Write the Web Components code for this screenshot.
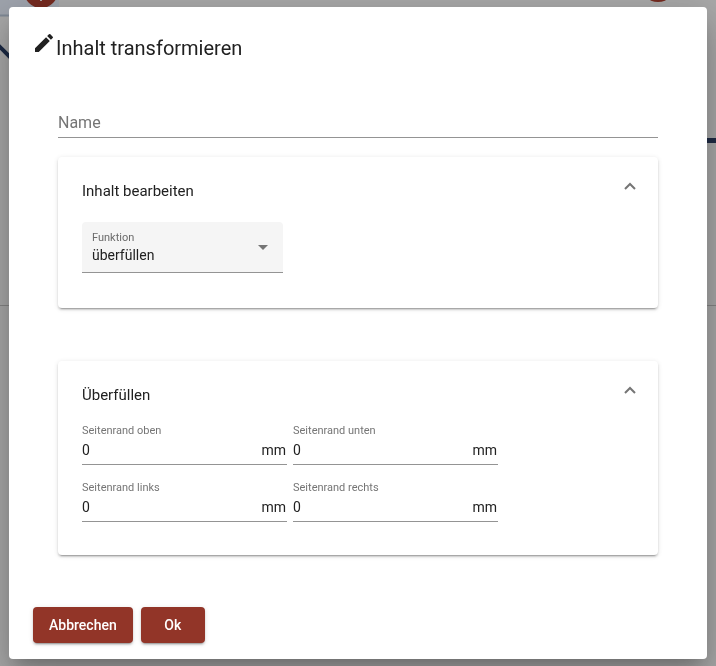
<!DOCTYPE html>
<html lang="de">
<head>
<meta charset="utf-8">
<meta name="viewport" content="width=device-width, initial-scale=1">
<title>Inhalt transformieren</title>
<style>
html, body { margin: 0; height: 100%; }
body { font-family: Roboto, "Liberation Sans", sans-serif; color: #212121; background: #a9a9a9; overflow: hidden; }
</style>
</head>
<body>
<transform-app></transform-app>
<script>
const define = (name, html, setup) => {
  const template = document.createElement('template');
  template.innerHTML = html;
  customElements.define(name, class extends HTMLElement {
    connectedCallback() {
      if (this.shadowRoot) return;
      const root = this.attachShadow({ mode: 'open' });
      root.append(template.content.cloneNode(true));
      if (setup) setup(this, root);
    }
  });
};

define('canvas-backdrop', `
<style>
:host { display: block; position: fixed; inset: 0; overflow: hidden; }
svg { display: block; width: 100%; height: 100%; }
</style>
<svg aria-hidden="true">
  <rect width="59" height="16" fill="#9fa4ad"/>
  <path d="M0 15.5H59" stroke="#808996" stroke-width="2"/>
  <path d="M-4 43L14 61" stroke="#1b2944" stroke-width="4"/>
  <path d="M0 305.5H716" stroke="#858585"/>
  <path d="M690 140.500H1000" stroke="#1f2b45" stroke-width="5"/>
  <circle cx="41" cy="-9" r="17" fill="#762b20"/>
  <path d="M41 -6V1" stroke="#aaa" stroke-width="2"/>
  <circle cx="658" cy="-16" r="18" fill="#762b20"/>
</svg>`);

define('modal-dialog', `
<style>
:host { display: flex; flex-direction: column; position: relative; box-sizing: border-box; margin: 7px 9px; padding-bottom: 16px; background: #fff; border-radius: 4px;
  box-shadow: 0 11px 15px -7px rgba(0,0,0,.2), 0 24px 38px 3px rgba(0,0,0,.14), 0 9px 46px 8px rgba(0,0,0,.12); }
header { display: flex; padding: 24px 23px; }
svg { width: 24px; height: 24px; fill: #212121; }
h1 { margin: 0; padding-top: 1px; font-size: 20px; line-height: 32px; font-weight: 400; }
main { display: flex; flex-direction: column; padding: 18px 49px 52px; }
footer { display: flex; gap: 8px; padding: 0 24px; }
</style>
<header><svg viewBox="0 0 24 24" aria-hidden="true"><path d="M3 17.250V21h3.750L17.810 9.940l-3.750-3.750L3 17.250zM20.710 7.040a1 1 0 0 0 0-1.410l-2.340-2.340a1 1 0 0 0-1.410 0l-1.830 1.830 3.750 3.750 1.830-1.830z"/></svg><h1><slot name="title"></slot></h1></header>
<main><slot></slot></main>
<footer><slot name="actions"></slot></footer>`);

define('name-field', `
<style>
:host { display: block; margin-bottom: 19px; }
input { display: block; box-sizing: border-box; width: 100%; height: 32px; padding: 2px 0 0; border: 0; border-bottom: 1px solid #949494; background: none; font: 400 16px/24px Roboto, "Liberation Sans", sans-serif; color: #212121; outline: 0; border-radius: 0; }
input::placeholder { color: #757575; opacity: 1; }
</style>
<input type="text" aria-label="Name" placeholder="Name">`);

define('expansion-card', `
<style>
:host { display: block; box-sizing: border-box; padding: 16px 24px 33px; border-radius: 4px; background: #fff;
  box-shadow: 0 3px 1px -2px rgba(0,0,0,.2), 0 2px 2px 0 rgba(0,0,0,.14), 0 1px 5px 0 rgba(0,0,0,.12); }
:host(:not(:last-of-type)) { margin-bottom: 53px; padding-bottom: 35px; }
header { display: flex; justify-content: space-between; align-items: flex-start; height: 49px; }
:host(:last-of-type) header { height: 47px; }
h2 { margin: 0; padding-top: 8px; font-size: 15px; line-height: 20px; font-weight: 400; }
button { display: flex; align-items: center; justify-content: center; width: 24px; height: 26px; margin-right: -8px; padding: 0; border: 0; background: none; cursor: pointer; }
svg { width: 12px; height: 8px; fill: none; stroke: #757575; stroke-width: 2; }
[hidden] { display: none; }
</style>
<header><h2></h2><button type="button" aria-expanded="true"><svg viewBox="0 0 12 8" aria-hidden="true"><path d="M1 7L6 2L11 7"/></svg></button></header>
<section><slot></slot></section>`, (host, root) => {
  root.querySelector('h2').textContent = host.getAttribute('heading');
  const button = root.querySelector('button');
  button.setAttribute('aria-label', host.getAttribute('heading'));
  button.addEventListener('click', () => {
    const section = root.querySelector('section');
    section.hidden = !section.hidden;
    button.setAttribute('aria-expanded', String(!section.hidden));
  });
});

define('function-select', `
<style>
:host { display: grid; max-width: 201px; height: 51px; background: #f5f5f5; border-radius: 4px 4px 0 0; }
label, select, svg { grid-area: 1 / 1; }
label { padding: 9px 10px 0; font-size: 11px; line-height: 14px; color: #6b6b6b; pointer-events: none; }
select { appearance: none; box-sizing: border-box; width: 100%; height: 51px; padding: 16px 32px 0 10px; border: 0; border-bottom: 1px solid #949494; border-radius: 0; background: none; font: 400 14px/20px Roboto, "Liberation Sans", sans-serif; color: #212121; outline: 0; }
svg { justify-self: end; align-self: center; width: 10px; height: 5px; margin-right: 15px; fill: #757575; pointer-events: none; }
</style>
<label for="fn">Funktion</label>
<select id="fn"><option>überfüllen</option></select>
<svg viewBox="0 0 10 5" aria-hidden="true"><path d="M0 0H10L5 5Z"/></svg>`);

define('field-grid', `
<style>
:host { display: grid; grid-template-columns: repeat(2, minmax(0, 205px)); gap: 16px 6px; }
</style>
<slot></slot>`);

define('margin-field', `
<style>
:host { display: block; }
label { display: block; line-height: 14px; font-size: 11px; color: #757575; }
div { display: flex; align-items: center; height: 24px; padding: 0 1px 2px 0; border-bottom: 1px solid #949494; font-size: 14px; }
input { flex: 1; min-width: 0; height: 20px; padding: 0; border: 0; background: none; font: 400 14px/20px Roboto, "Liberation Sans", sans-serif; color: #212121; outline: 0; }
</style>
<label for="value"></label>
<div><input id="value" type="text" inputmode="numeric" value="0"><span>mm</span></div>`, (host, root) => {
  root.querySelector('label').textContent = host.getAttribute('label');
});

define('action-button', `
<style>
:host { display: block; }
button { min-width: 64px; height: 36px; padding: 0 16px; border: 0; border-radius: 4px; background: #923528; color: #fff; font: 500 14px/36px Roboto, "Liberation Sans", sans-serif; cursor: pointer;
  box-shadow: 0 3px 1px -2px rgba(0,0,0,.2), 0 2px 2px 0 rgba(0,0,0,.14), 0 1px 5px 0 rgba(0,0,0,.12); }
</style>
<button type="button"><slot></slot></button>`);

define('transform-app', `
<style>:host { display: flow-root; }</style>
<canvas-backdrop></canvas-backdrop>
<modal-dialog role="dialog" aria-modal="true" aria-label="Inhalt transformieren">
  <span slot="title">Inhalt transformieren</span>
  <name-field></name-field>
  <expansion-card heading="Inhalt bearbeiten"><function-select></function-select></expansion-card>
  <expansion-card heading="Überfüllen">
    <field-grid>
      <margin-field label="Seitenrand oben"></margin-field>
      <margin-field label="Seitenrand unten"></margin-field>
      <margin-field label="Seitenrand links"></margin-field>
      <margin-field label="Seitenrand rechts"></margin-field>
    </field-grid>
  </expansion-card>
  <action-button slot="actions">Abbrechen</action-button>
  <action-button slot="actions">Ok</action-button>
</modal-dialog>`);
</script>
</body>
</html>
